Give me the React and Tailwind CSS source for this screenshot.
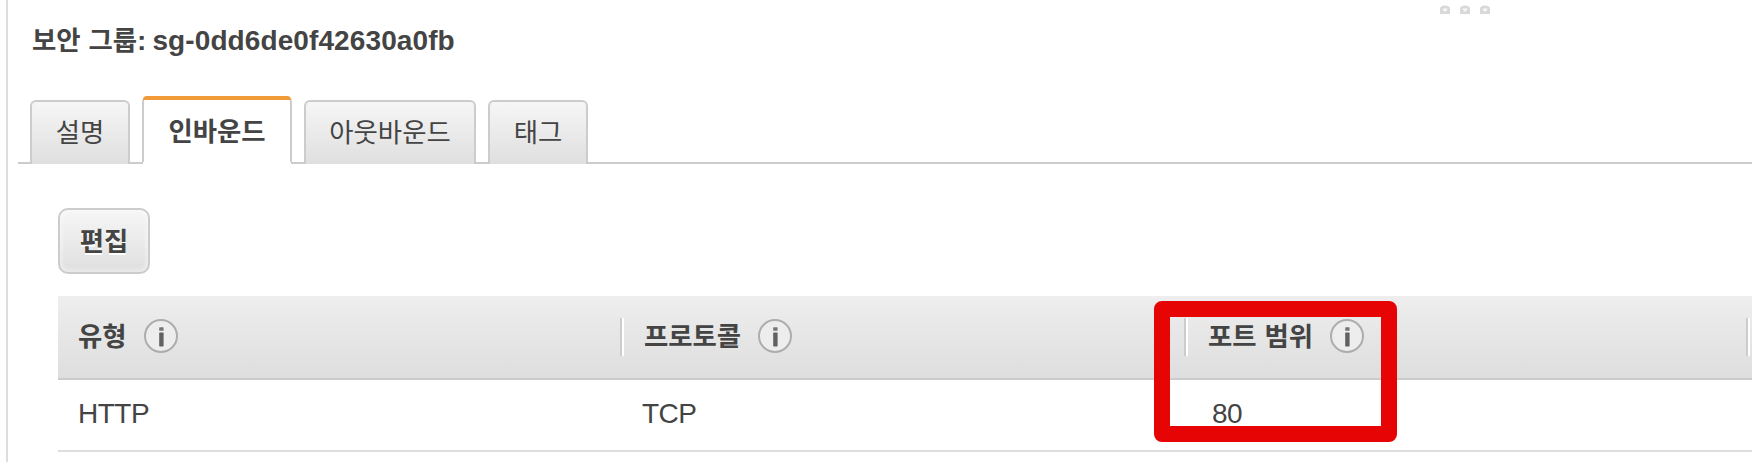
const tabs = [
  { label: '설명', width: 'w-[100px]' },
  { label: '인바운드', width: 'w-[150px]', active: true },
  { label: '아웃바운드', width: 'w-[172px]' },
  { label: '태그', width: 'w-[100px]' },
];

const columns = [
  { label: '유형', value: 'HTTP', width: 'w-[562px]', head: 'pl-[20px]', labelBox: 'w-[66px]', cell: 'pl-[20px]' },
  { label: '프로토콜', value: 'TCP', width: 'w-[564px]', head: 'pl-[20px]', labelBox: 'w-[114px]', cell: 'pl-[22px]', divided: true },
  { label: '포트 범위', value: '80', width: 'w-[562px]', head: 'pl-[20px]', labelBox: 'w-[122px]', cell: 'pl-[28px]', divided: true },
  { label: '', value: '', width: 'w-[6px]', head: '', labelBox: '', cell: '', divided: true },
];

function Ko({ children, className = '' }) {
  return (
    <span className={`font-['Noto_Sans_CJK_KR',sans-serif] text-[26.4px] [word-spacing:2px] whitespace-nowrap ${className}`}>
      {children}
    </span>
  );
}

function InfoIcon() {
  return (
    <svg width="34" height="34" viewBox="0 0 34 34" className="block shrink-0">
      <circle cx="17" cy="17" r="16" fill="#ededed" stroke="#adadad" strokeWidth="2" />
      <rect x="15.2" y="8.2" width="4.4" height="3.6" rx="0.6" fill="#777" />
      <rect x="15.2" y="13.6" width="4.4" height="13.8" rx="0.6" fill="#616161" />
    </svg>
  );
}

function Grip() {
  return (
    <div className="absolute top-[5px] left-[1440px] flex gap-[10px]">
      {[0, 1, 2].map((i) => (
        <svg key={i} width="10" height="9" viewBox="0 0 10 9">
          <path d="M0 9V4Q0 0.5 5 0.5T10 4V9Z" fill="#d9d9d9" />
          <path d="M2.5 3.5H7.5L6.5 5.5L5 7L3.5 5.5Z" fill="#f8f8f8" />
        </svg>
      ))}
    </div>
  );
}

function Tab({ label, width, active }) {
  if (active) {
    return (
      <div className={`relative h-[68px] ${width} rounded-t-[6px] rounded-b-[3px] border-x-2 border-[#ccc] bg-white`}>
        <div className="absolute top-0 -right-px -left-px h-[4px] rounded-t-[5px] bg-[#f19b38]" />
        <div className="flex h-full items-center justify-center">
          <Ko className="font-bold">{label}</Ko>
        </div>
        <div className="absolute -right-px bottom-0 -left-px h-[2px] bg-white" />
      </div>
    );
  }
  return (
    <div
      className={`flex h-[64px] ${width} items-center justify-center rounded-t-[6px] border-x-2 border-t-2 border-[#ccc] bg-linear-to-b from-[#f6f6f6] to-[#dfdfdf] pb-[4px]`}
    >
      <Ko>{label}</Ko>
    </div>
  );
}

export default function App() {
  return (
    <div className="relative h-[462px] w-[1752px] overflow-hidden bg-white pl-[6px] font-['Liberation_Sans',sans-serif] text-[28px] leading-none text-[#444]">
      <Grip />
      <div className="h-full border-l-2 border-[#ddd] pt-[20px]">
        <h1 className="flex h-[40px] items-center pl-[24px] font-bold whitespace-nowrap">
          <Ko className="pb-px">보안 그룹</Ko>
          <span className="pt-[2px] tracking-[0.1px] [word-spacing:-2px]">: sg-0dd6de0f42630a0fb</span>
        </h1>

        <div className="mt-[36px] ml-[10px] flex h-[68px] items-end gap-[12px] bg-[linear-gradient(#ccc,#ccc)] bg-[length:100%_2px] bg-bottom bg-no-repeat pl-[12px]">
          {tabs.map((tab) => (
            <Tab key={tab.label} {...tab} />
          ))}
        </div>

        <div className="mt-[44px] ml-[50px]">
          <button className="flex h-[66px] w-[92px] items-center justify-center rounded-[10px] border-2 border-[#ccc] bg-linear-to-b from-[#f6f6f6] to-[#dfdfdf] pb-px shadow-[inset_0_0_4px_2px_rgba(255,255,255,0.45)] [text-shadow:0_2px_0_#fff]">
            <Ko className="font-bold">편집</Ko>
          </button>

          <div className="mt-[22px]">
            <div className="flex h-[84px] border-b-2 border-[#ccc] bg-linear-to-b from-[#eee] to-[#dedede]">
              {columns.map((col, i) => (
                <div key={i} className={`flex shrink-0 pt-[22px] ${col.width}`}>
                  {col.divided && <div className="h-[38px] w-[4px] shrink-0 border-l-2 border-[#ccc] bg-white" />}
                  {col.label && (
                    <div className={`flex h-[38px] items-center pb-[2px] ${col.head}`}>
                      <div className={col.labelBox}>
                        <Ko className="font-bold">{col.label}</Ko>
                      </div>
                      <InfoIcon />
                    </div>
                  )}
                </div>
              ))}
            </div>
            <div className="flex h-[72px] items-center border-b-2 border-[#ddd] pb-[2px]">
              {columns.map((col, i) => (
                <div key={i} className={`shrink-0 tracking-[-0.5px] ${col.width} ${col.cell}`}>
                  {col.value}
                </div>
              ))}
            </div>
          </div>
        </div>
      </div>
      <div className="absolute top-[301px] left-[1154px] h-[141px] w-[243px] rounded-[8px] border-[16px] border-[#e60404]" />
    </div>
  );
}
